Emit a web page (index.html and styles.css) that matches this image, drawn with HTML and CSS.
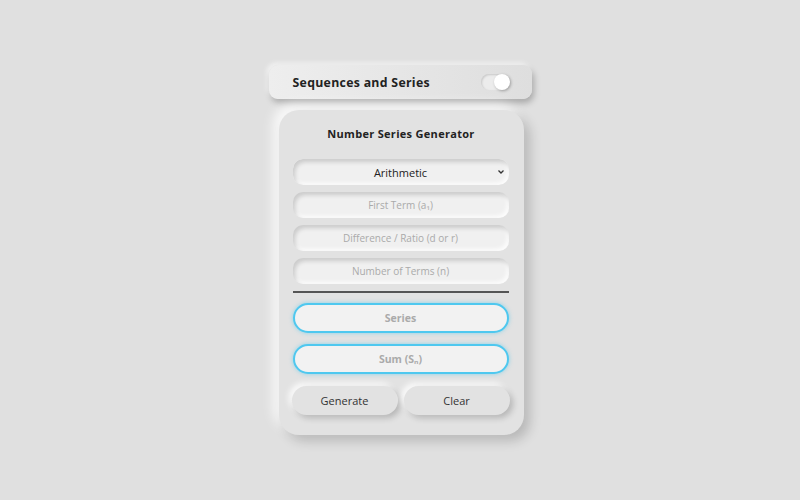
FILE: index.html
```html
<!DOCTYPE html>
<html lang="en">
<head>
  <meta charset="UTF-8" />
  <meta name="viewport" content="width=device-width, initial-scale=1" />
  <title>Sequences and Series</title>
  <link rel="stylesheet" href="styles.css">
</head>
<body>
  <div class="wrap">
    <header class="topbar">
      <h1>Sequences and Series</h1>
      <label class="toggle">
        <input type="checkbox" checked>
        <span class="knob"></span>
      </label>
    </header>

    <!-- Generator card -->
    <main class="card">
      <h2>Number Series Generator</h2>
      <select class="field">
        <option>Arithmetic</option>
        <option>Geometric</option>
      </select>
      <input class="field" type="text" placeholder="First Term (a₁)">
      <input class="field" type="text" placeholder="Difference / Ratio (d or r)">
      <input class="field" type="text" placeholder="Number of Terms (n)">
      <hr class="divider">
      <div class="result">Series</div>
      <div class="result">Sum (Sₙ)</div>
      <div class="actions">
        <button class="btn">Generate</button>
        <button class="btn">Clear</button>
      </div>
    </main>
  </div>
</body>
</html>
```

FILE: styles.css
```css
body {
  margin: 0;
  font-family: 'Open Sans', 'Noto Sans', sans-serif;
  background: #e0e0e0;
  height: 100vh;
  color: #333;
}

.wrap {
  width: 263px;
  margin: 0 auto;
  padding-top: 65px;
  display: flex;
  flex-direction: column;
  align-items: flex-start;
  gap: 11px;
}

.topbar {
  box-sizing: border-box;
  width: 263px;
  height: 34px;
  padding: 0 22px 0 24px;
  display: flex;
  align-items: center;
  justify-content: space-between;
  border-radius: 9px;
  background: linear-gradient(90deg, #eeeeee, #dedede);
  box-shadow: 2px 4px 6px rgba(0, 0, 0, 0.25), -2px -2px 5px rgba(255, 255, 255, 0.7);
}

.topbar h1 {
  margin: 0;
  font-size: 12.3px;
  font-weight: 700;
  letter-spacing: 0.3px;
  color: #222;
}

.toggle {
  position: relative;
  width: 29px;
  height: 16px;
}

.toggle input {
  display: none;
}

.toggle .knob {
  position: absolute;
  inset: 0;
  border-radius: 8px;
  background: #ececec;
  box-shadow: inset 1px 1px 2px rgba(0, 0, 0, 0.15);
}

.toggle .knob::after {
  content: "";
  position: absolute;
  right: 0;
  top: 0;
  width: 16px;
  height: 16px;
  border-radius: 50%;
  background: #fff;
  box-shadow: 1px 1px 3px rgba(0, 0, 0, 0.3);
}

.card {
  box-sizing: border-box;
  width: 245px;
  height: 325px;
  margin-left: 10px;
  padding: 16px 14px 0;
  border-radius: 20px;
  background: #e2e2e2;
  box-shadow: 6px 6px 12px rgba(0, 0, 0, 0.18), -6px -6px 12px rgba(255, 255, 255, 0.8);
  display: flex;
  flex-direction: column;
  gap: 7px;
}

.card h2 {
  margin: 0 0 10px;
  height: 16px;
  line-height: 16px;
  font-size: 11px;
  font-weight: 700;
  letter-spacing: 0.3px;
  text-align: center;
  color: #222;
}

.field {
  box-sizing: border-box;
  width: 216px;
  height: 26px;
  flex-shrink: 0;
  border: none;
  border-radius: 10px;
  background: #f0f0f0;
  box-shadow: inset 2px 3px 4px rgba(0, 0, 0, 0.16), inset -2px -2px 4px rgba(255, 255, 255, 0.9);
  font-family: inherit;
  font-size: 10px;
  text-align: center;
  color: #333;
  outline: none;
}

select.field {
  appearance: none;
  text-align-last: center;
  font-size: 11px;
  color: #222;
  padding: 0 4px;
  background: #f0f0f0 url("data:image/svg+xml;utf8,<svg xmlns='http://www.w3.org/2000/svg' width='8' height='6' viewBox='0 0 8 6'><path d='M1.5 1.5 L4 4 L6.5 1.5' fill='none' stroke='%23333' stroke-width='1.3'/></svg>") no-repeat right 4px center;
}

.field::placeholder {
  color: #aaa;
}

.divider {
  width: 216px;
  margin: 0 0 3px;
  border: none;
  border-top: 2px solid #555;
}

.result {
  box-sizing: border-box;
  width: 216px;
  height: 30px;
  flex-shrink: 0;
  margin-bottom: 4px;
  border: 2px solid #4fc8ef;
  border-radius: 15px;
  background: #f2f2f2;
  box-shadow: 0 0 4px rgba(79, 200, 239, 0.6);
  display: flex;
  align-items: center;
  justify-content: center;
  font-size: 10.5px;
  font-weight: 700;
  color: #aaa;
}

.actions {
  display: flex;
  gap: 6px;
  margin-top: 1px;
  margin-left: -1px;
}

.btn {
  width: 106px;
  height: 29px;
  border: none;
  border-radius: 15px;
  background: #e2e2e2;
  box-shadow: 3px 3px 6px rgba(0, 0, 0, 0.2), -3px -3px 6px rgba(255, 255, 255, 0.9);
  font-family: inherit;
  font-size: 11px;
  color: #333;
  cursor: pointer;
}
```
